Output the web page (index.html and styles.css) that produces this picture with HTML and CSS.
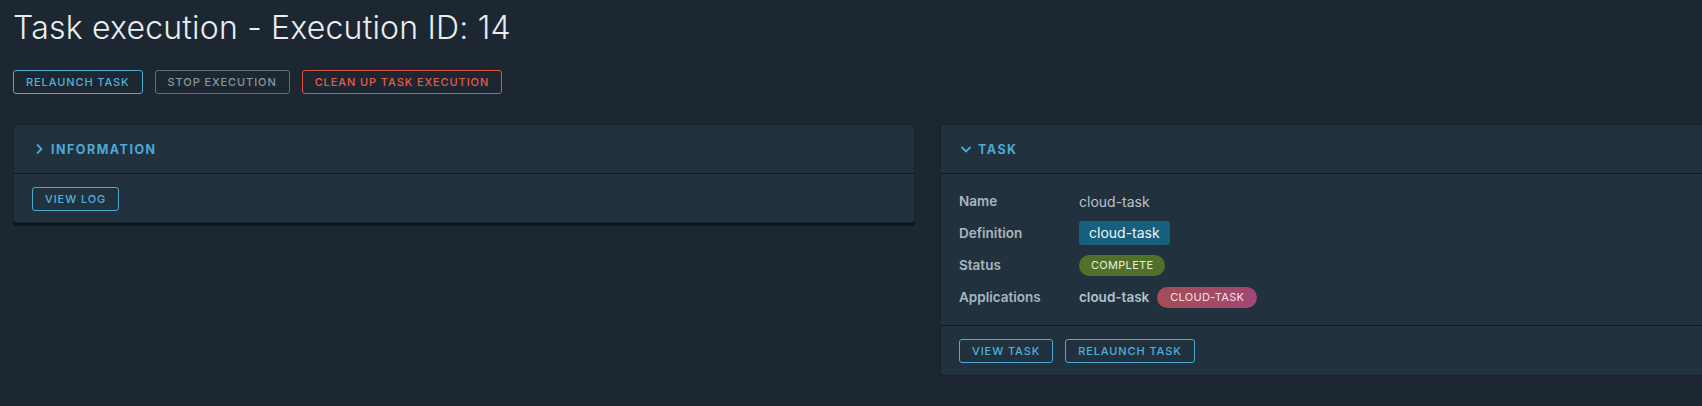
FILE: index.html
```html
<!DOCTYPE html>
<html lang="en">
<head>
<meta charset="utf-8">
<title>Task execution</title>
<link rel="stylesheet" href="styles.css">
</head>
<body>
<main class="page">
  <h1 class="title">Task execution - Execution ID: 14</h1>
  <div class="actions">
    <button class="btn btn-blue">Relaunch task</button>
    <button class="btn btn-gray">Stop execution</button>
    <button class="btn btn-red">Clean up task execution</button>
  </div>
  <div class="cards">
    <section class="card card-info">
      <header class="card-header">
        <svg class="chev" width="10" height="12" viewBox="0 0 10 12"><path d="M3 1.5 L7.5 6 L3 10.5" fill="none" stroke="currentColor" stroke-width="1.8"/></svg>
        <span>Information</span>
      </header>
      <div class="card-block">
        <button class="btn btn-blue">View log</button>
      </div>
    </section>
    <section class="card card-task">
      <header class="card-header">
        <svg class="chev" width="12" height="10" viewBox="0 0 12 10"><path d="M1.5 3 L6 7.5 L10.5 3" fill="none" stroke="currentColor" stroke-width="1.8"/></svg>
        <span>Task</span>
      </header>
      <div class="card-block">
        <dl class="props">
          <div class="row"><dt>Name</dt><dd class="plain">cloud-task</dd></div>
          <div class="row"><dt>Definition</dt><dd><span class="badge-def">cloud-task</span></dd></div>
          <div class="row"><dt>Status</dt><dd><span class="pill pill-green">Complete</span></dd></div>
          <div class="row"><dt>Applications</dt><dd><span class="app">cloud-task</span><span class="pill pill-pink">Cloud-task</span></dd></div>
        </dl>
      </div>
      <div class="card-footer">
        <button class="btn btn-blue">View task</button>
        <button class="btn btn-blue">Relaunch task</button>
      </div>
    </section>
  </div>
</main>
</body>
</html>
```
FILE: styles.css
```css
html, body {
  margin: 0;
  padding: 0;
  background: #1d2731;
  overflow: hidden;
}
body {
  font-family: Inter, "Noto Sans", sans-serif;
  color: #c9d3d9;
}
.page {
  padding: 8px 13px 0 13px;
}
.title {
  margin: 0;
  font-weight: 300;
  font-size: 32px;
  line-height: 40px;
  color: #e8eef1;
  letter-spacing: 0.2px;
}
.actions {
  display: flex;
  gap: 12px;
  margin-top: 22px;
}
.btn {
  height: 24px;
  padding: 0 12px;
  background: transparent;
  border: 1px solid;
  border-radius: 3px;
  font-family: Inter, "Noto Sans", sans-serif;
  font-size: 11px;
  font-weight: 500;
  letter-spacing: 0.9px;
  text-transform: uppercase;
  line-height: 22px;
  cursor: pointer;
}
.btn-blue { color: #4fb2dc; border-color: #4fa9d2; }
.btn-gray { color: #8797a1; border-color: #5f6f79; }
.btn-red { color: #ea5a49; border-color: #e0533f; }

.cards {
  display: flex;
  gap: 25px;
  margin-top: 30px;
  align-items: flex-start;
}
.card {
  flex: 0 0 902px;
  box-sizing: border-box;
  background: #22313e;
  border: 1px solid #17232c;
  border-radius: 3px;
  box-shadow: 0 3px 0 0 #0e171e;
}
.card-header {
  height: 48px;
  display: flex;
  align-items: center;
  gap: 7px;
  padding: 0 20px;
  border-bottom: 1px solid #0f1a22;
  color: #4aaad6;
  font-size: 12.5px;
  font-weight: 700;
  letter-spacing: 1.5px;
  text-transform: uppercase;
}
.card-task .card-header { padding-left: 19px; gap: 6px; }
.card-block {
  padding: 13px 18px 11px;
}
.card-task .card-block {
  padding: 15px 18px 16px;
  border-bottom: 1px solid #0f1a22;
}
.props {
  margin: 0;
  display: flex;
  flex-direction: column;
  gap: 8px;
}
.row {
  display: flex;
  align-items: center;
  height: 24px;
}
dt {
  width: 120px;
  font-size: 13.5px;
  font-weight: 600;
  color: #a9b7bf;
}
dd {
  margin: 0;
  display: flex;
  align-items: center;
  gap: 8px;
  font-size: 14px;
}
.plain { color: #b7c2c9; }
.app { color: #b7c2c9; font-weight: 600; font-size: 13.5px; }
.badge-def {
  display: inline-block;
  height: 24px;
  line-height: 24px;
  padding: 0 10px;
  border-radius: 3px;
  background: #175f7e;
  color: #eef5f8;
  font-size: 14px;
}
.pill {
  display: inline-block;
  height: 21px;
  line-height: 21px;
  padding: 0 12px;
  border-radius: 11px;
  font-size: 11px;
  font-weight: 400;
  text-transform: uppercase;
  letter-spacing: 0.3px;
}
.pill-green { background: #51712b; color: #e6eed9; }
.pill-pink { background: linear-gradient(90deg, #a44d56, #a04775); color: #f4e0e6; padding: 0 13px; }
.card-footer {
  display: flex;
  gap: 12px;
  padding: 13px 18px 12px;
}
```
